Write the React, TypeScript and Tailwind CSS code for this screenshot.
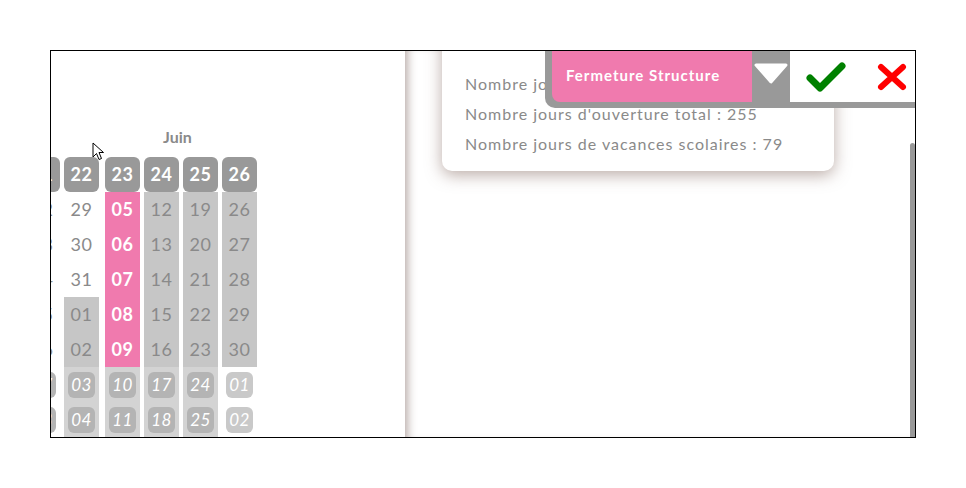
import React from 'react';

/* -------------------- Calendar data -------------------- */
type CellKind = 'may' | 'june' | 'pink' | 'weMay' | 'weJune' | 'weJuly';

interface Week {
  week: string;
  days: [string, CellKind][];
}

const weeks: Week[] = [
  { week: '21', days: [['22', 'may'], ['23', 'may'], ['24', 'may'], ['25', 'may'], ['26', 'may'], ['27', 'weMay'], ['28', 'weMay']] },
  { week: '22', days: [['29', 'may'], ['30', 'may'], ['31', 'may'], ['01', 'june'], ['02', 'june'], ['03', 'weJune'], ['04', 'weJune']] },
  { week: '23', days: [['05', 'pink'], ['06', 'pink'], ['07', 'pink'], ['08', 'pink'], ['09', 'pink'], ['10', 'weJune'], ['11', 'weJune']] },
  { week: '24', days: [['12', 'june'], ['13', 'june'], ['14', 'june'], ['15', 'june'], ['16', 'june'], ['17', 'weJune'], ['18', 'weJune']] },
  { week: '25', days: [['19', 'june'], ['20', 'june'], ['21', 'june'], ['22', 'june'], ['23', 'june'], ['24', 'weJune'], ['25', 'weJune']] },
  { week: '26', days: [['26', 'june'], ['27', 'june'], ['28', 'june'], ['29', 'june'], ['30', 'june'], ['01', 'weJuly'], ['02', 'weJuly']] },
];

function DayCell({ label, kind }: { label: string; kind: CellKind }) {
  if (kind === 'weMay' || kind === 'weJune' || kind === 'weJuly') {
    const bg = kind === 'weJune' ? 'bg-[#d3d3d3]' : 'bg-white';
    const pill = kind === 'weJuly' ? 'bg-[#c9c9c9]' : 'bg-[#b4b4b4]';
    return (
      <div className={`h-[35px] flex items-center justify-center ${bg}`}>
        <div className={`w-[27px] h-[26px] rounded-[6px] flex items-center justify-center italic text-white text-[17px] tracking-[0.5px] ${pill}`}>
          {label}
        </div>
      </div>
    );
  }
  const styles: Record<string, string> = {
    may: 'bg-white text-[#8a8a8a]',
    june: 'bg-[#c6c6c6] text-[#8a8a8a]',
    pink: 'bg-[#f07aae] text-white font-bold',
  };
  return (
    <div className={`h-[35px] flex items-center justify-center text-[18px] tracking-[0.5px] ${styles[kind]}`}>
      {label}
    </div>
  );
}

/* -------------------- Component -------------------- */
export default function App() {
  return (
    <div className="w-[966px] h-[488px] bg-white pt-[50px] pl-[50px]" style={{ fontFamily: 'Lato, "Open Sans", sans-serif' }}>
      <div className="w-[866px] h-[388px] border border-black flex overflow-hidden">
        {/* Left panel: calendar */}
        <div className="w-[354px] shrink-0 relative overflow-hidden pt-[76px]">
          <div className="pl-[112px] h-[30px] text-[16px] font-bold text-[#8a8a8a] leading-[20px]">Juin</div>
          <div className="flex gap-[4px] ml-[-26px]">
            {weeks.map((w, i) => (
              <div key={w.week} className={`w-[35px] shrink-0 ${i === 2 ? 'ml-[2px]' : ''}`}>
                <div className="h-[35px] rounded-[6px] bg-[#999999] text-white font-bold text-[18px] tracking-[0.5px] flex items-center justify-center">
                  {w.week}
                </div>
                {w.days.map(([d, k], j) => (
                  <DayCell key={j} label={d} kind={k} />
                ))}
              </div>
            ))}
          </div>
          {/* mouse cursor */}
          <svg className="absolute left-[41px] top-[91px]" width="13" height="20" viewBox="0 0 13 20">
            <path d="M1 1 L1 15 L4.5 11.5 L7 17.5 L9.5 16.5 L7 10.5 L11.5 10.5 Z" fill="white" stroke="black" strokeWidth="1" strokeLinejoin="round" />
          </svg>
        </div>

        {/* Right panel */}
        <div className="flex-1 relative shadow-[inset_9px_0_9px_-6px_rgba(120,95,90,0.5)]">
          {/* Stats card */}
          <div className="absolute left-[37px] top-[-20px] w-[392px] bg-white rounded-[10px] shadow-[0_4px_16px_rgba(120,90,80,0.5)] pl-[23px] pt-[38px] pb-[12px] text-[16px] tracking-[1px] text-[#8a8a8a]">
            <div className="h-[30px] leading-[30px]">Nombre jours de fermeture : 110</div>
            <div className="h-[30px] leading-[30px]">Nombre jours d'ouverture total : 255</div>
            <div className="h-[30px] leading-[30px]">Nombre jours de vacances scolaires : 79</div>
          </div>

          {/* Toolbar */}
          <div className="absolute right-0 top-0 w-[370px] h-[57px] bg-[#999999] rounded-bl-[10px] pl-[7px] pb-[6px] flex">
            <div className="w-[200px] h-[51px] bg-[#f07aae] rounded-bl-[8px] flex items-center pl-[14px] pb-[2px] text-white font-bold text-[15px] tracking-[1px]">
              Fermeture Structure
            </div>
            <div className="w-[38px] flex items-start justify-center pt-[12px]">
              <svg width="36" height="22" viewBox="0 0 36 22">
                <path d="M3 2 L33 2 L18 19 Z" fill="white" stroke="white" strokeWidth="3" strokeLinejoin="round" />
              </svg>
            </div>
            <div className="flex-1 bg-white flex items-center">
              <svg className="ml-[16px]" width="40" height="30" viewBox="0 0 40 30">
                <path d="M4 16 L14 26 L36 4" fill="none" stroke="#008000" strokeWidth="7" strokeLinecap="round" strokeLinejoin="round" />
              </svg>
              <svg className="ml-[31px]" width="30" height="28" viewBox="0 0 30 28">
                <path d="M4 4 L26 24 M26 4 L4 24" fill="none" stroke="#ff0000" strokeWidth="6" strokeLinecap="round" />
              </svg>
            </div>
          </div>

          {/* Scrollbar */}
          <div className="absolute right-0 top-[92px] bottom-0 w-[5px] bg-[#999999] rounded-t-[3px]" />
        </div>
      </div>
    </div>
  );
}
